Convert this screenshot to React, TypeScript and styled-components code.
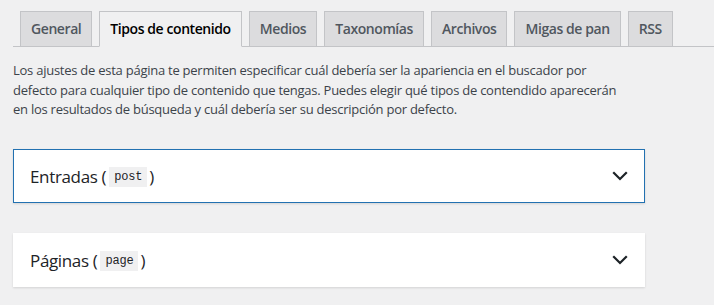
import React from "react";
import styled, { createGlobalStyle } from "styled-components";

const Global = createGlobalStyle`
  html, body { margin: 0; padding: 0; background: #f0f0f1; }
  body { font-family: "Open Sans", "Noto Sans", sans-serif; color: #3c434a; }
`;

const Page = styled.div`
  padding-top: 11px;
  width: 714px;
  height: 305px;
  overflow: hidden;
`;

const TabBar = styled.nav`
  display: flex;
  margin-left: 13px;
  padding-left: 7px;
  gap: 7px;
  border-bottom: 1px solid #c3c4c7;
`;

const Tab = styled.a<{ $active?: boolean }>`
  display: block;
  padding: 5px 10px;
  margin-bottom: -1px;
  font-size: 14px;
  line-height: 24px;
  font-weight: 600;
  letter-spacing: -0.42px;
  white-space: nowrap;
  border: 1px solid #c3c4c7;
  border-bottom-color: ${(p) => (p.$active ? "#f0f0f1" : "#c3c4c7")};
  background: ${(p) => (p.$active ? "#f0f0f1" : "#dcdcde")};
  color: ${(p) => (p.$active ? "#000" : "#50575e")};
  text-decoration: none;
`;

const Content = styled.div`
  padding-left: 13px;
`;

const Intro = styled.p`
  margin: 14px 0 29px;
  max-width: 605px;
  font-size: 13px;
  line-height: 19.6px;
  letter-spacing: -0.25px;
  color: #3c434a;
`;

const Panel = styled.section<{ $focused?: boolean }>`
  box-sizing: border-box;
  width: 632px;
  height: 54px;
  margin-bottom: 30px;
  display: flex;
  align-items: center;
  justify-content: space-between;
  padding: 1px 16px 0 16px;
  background: #fff;
  border: 1px solid ${(p) => (p.$focused ? "#2271b1" : "#fff")};
  box-shadow: 0 1px 2px rgba(0, 0, 0, 0.12);
`;

const Title = styled.h2`
  margin: 0;
  font-size: 17px;
  font-weight: 500;
  letter-spacing: -0.35px;
  color: #1d2327;
  display: flex;
  align-items: center;
`;

const Code = styled.code`
  display: inline-block;
  margin: 1px 2px 0 3px;
  padding: 0 5px;
  height: 20px;
  line-height: 21px;
  font-family: "Liberation Mono", "DejaVu Sans Mono", monospace;
  font-size: 12px;
  letter-spacing: -0.2px;
  background: #f0f0f1;
  color: #1d2327;
`;

const Chevron = () => (
  <svg width="16" height="10" viewBox="0 0 16 10" aria-hidden="true">
    <polyline
      points="2,2 8,8 14,2"
      fill="none"
      stroke="#1d2327"
      strokeWidth="2.2"
      strokeLinecap="square"
    />
  </svg>
);

const tabs = [
  "General",
  "Tipos de contenido",
  "Medios",
  "Taxonomías",
  "Archivos",
  "Migas de pan",
  "RSS",
];

const panels = [
  { label: "Entradas", slug: "post", focused: true },
  { label: "Páginas", slug: "page", focused: false },
];

export default function App() {
  return (
    <Page>
      <Global />
      <TabBar>
        {tabs.map((t) => (
          <Tab key={t} $active={t === "Tipos de contenido"} href="#">
            {t}
          </Tab>
        ))}
      </TabBar>
      <Content>
        <Intro>
          Los ajustes de esta página te permiten especificar cuál debería ser la
          apariencia en el buscador por defecto para cualquier tipo de contenido
          que tengas. Puedes elegir qué tipos de contendido aparecerán en los
          resultados de búsqueda y cuál debería ser su descripción por defecto.
        </Intro>
        {panels.map((p) => (
          <Panel key={p.slug} $focused={p.focused}>
            <Title>
              {p.label} (<Code>{p.slug}</Code>)
            </Title>
            <Chevron />
          </Panel>
        ))}
      </Content>
    </Page>
  );
}
